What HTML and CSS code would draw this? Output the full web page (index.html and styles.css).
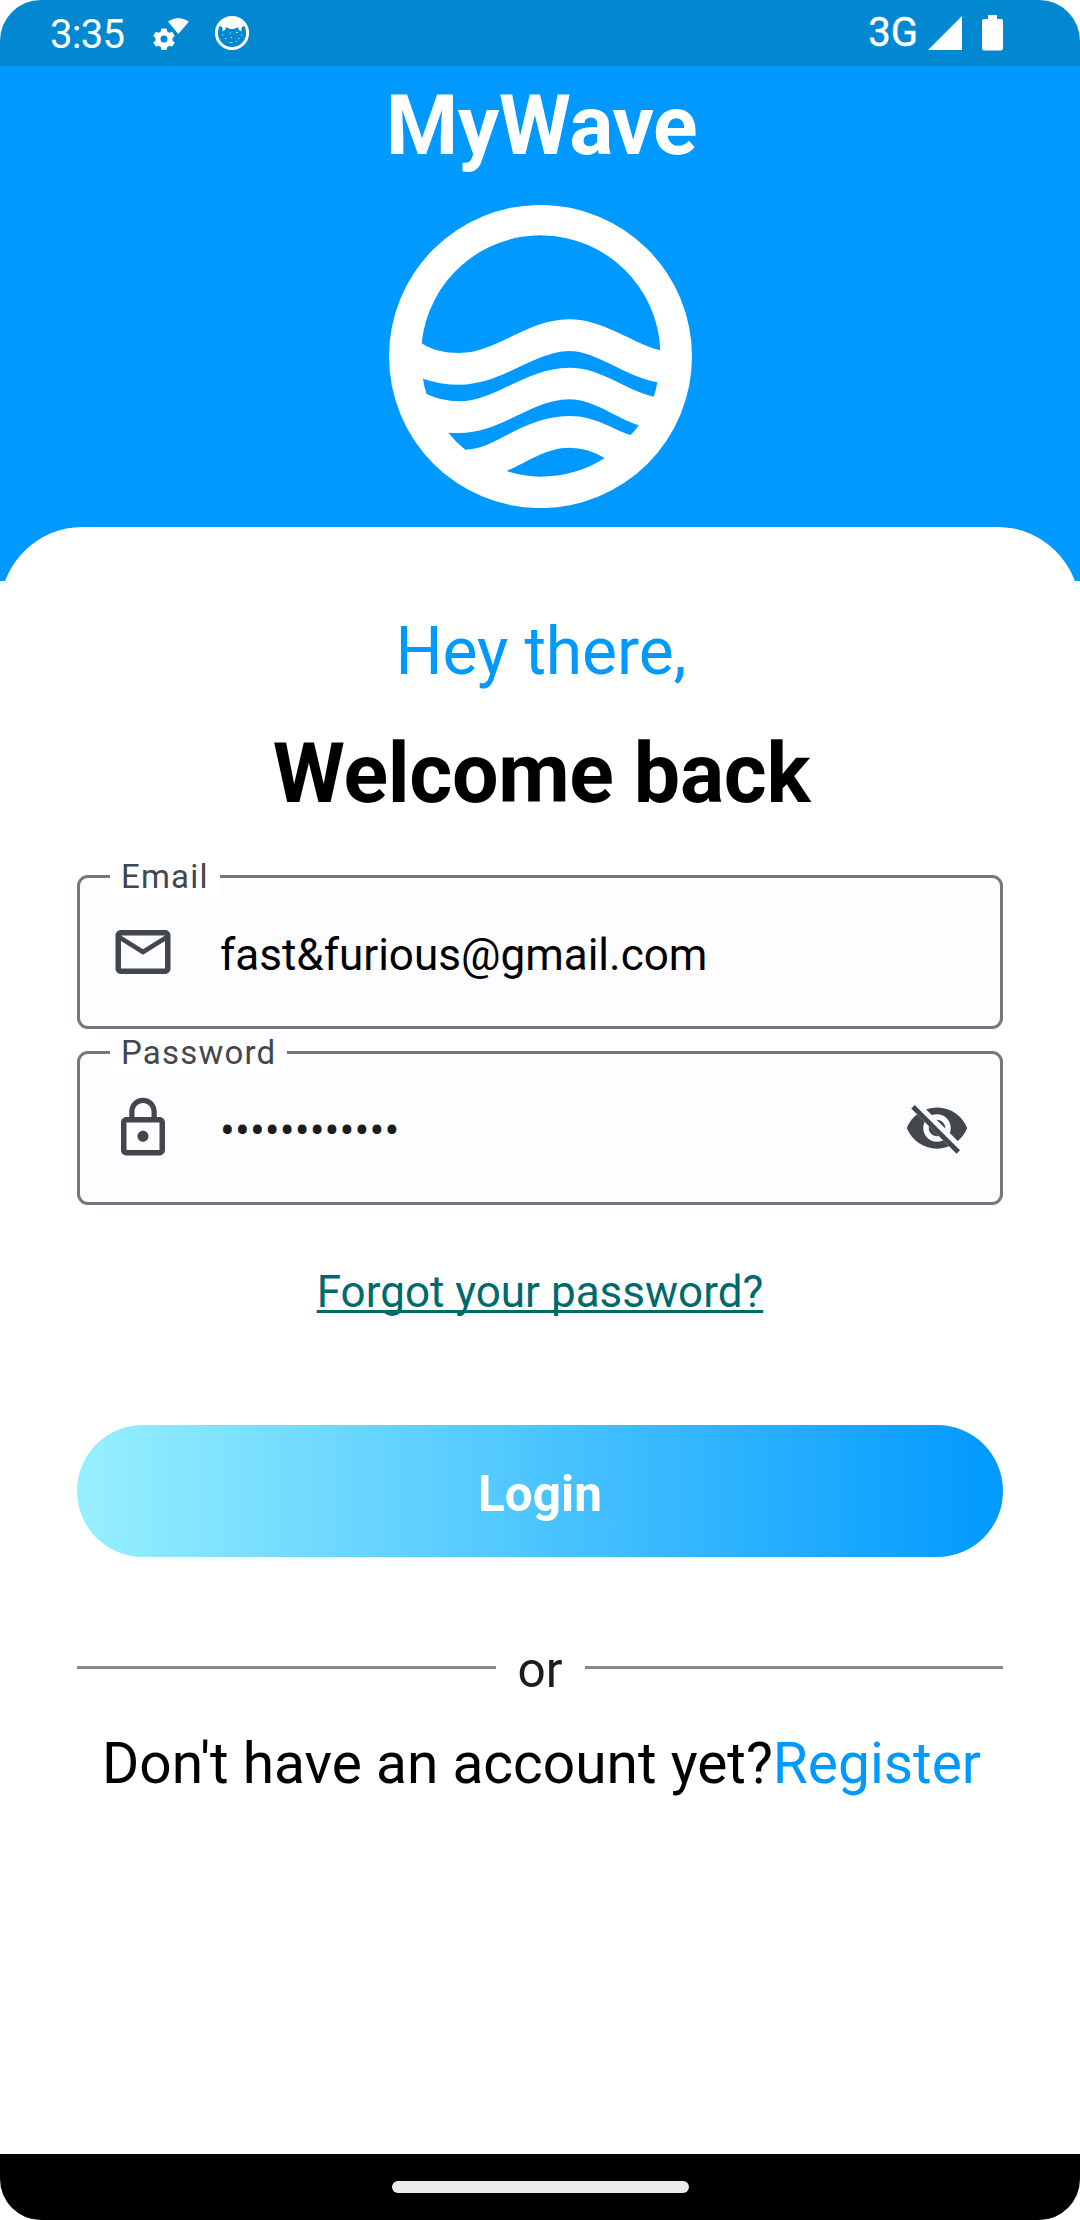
FILE: index.html
```html
<!DOCTYPE html>
<html lang="en">
<head>
<meta charset="utf-8">
<title>MyWave</title>
<link rel="stylesheet" href="styles.css">
</head>
<body>
<div class="screen">
  <div class="status-bar">
    <span class="clock">3:35</span>
    <svg class="gear" width="36" height="36" viewBox="0 0 36 36">
      <path d="M25.3 18 15 5.500Q25 -1.500 36 5.500Z"/>
      <path fill-rule="evenodd" d="M8.500 12.500h5l.8 3.100 2 1.200 3-1 2.400 4.200-2.200 2v2.400l2.200 2-2.400 4.200-3-.9-2 1.200-.8 3.100h-5l-.8-3.100-2-1.200-3 .9L.3 26.400l2.200-2V22l-2.200-2 2.400-4.200 3 1 2-1.200zM11 19.600a3.500 3.500 0 1 0 0 7 3.500 3.500 0 0 0 0-7z"/>
    </svg>
    <svg class="cat" width="36" height="36" viewBox="0 0 36 36">
      <circle cx="18" cy="18" r="15.600" fill="none" stroke="#fff" stroke-width="3"/>
      <path d="M6 11Q10 3 18 3t12 8l-2.500 1.500 0 4-2.500-1.500-1-2.500q-2-.5-3.500 1.500h-5q-1.500-2-3.500-1.500L11 15l-2.500 1.500v-4z"/>
      <path class="specks" d="M8 20h1.500m6-2h1.500m5-.5h2m3 2.500h1.500M11 23.500h1.500m4-1h1.500m6 1h1.500m-9 4h2m3-1h1m-8 1h1"/>
    </svg>
    <span class="network">3G</span>
    <svg class="signal" width="34" height="34" viewBox="0 0 34 34"><path d="M34 0v34H0z"/></svg>
    <svg class="battery" width="21" height="36" viewBox="0 0 21 36"><path d="M6 0h9v4h4q2 0 2 2v27.500q0 2-2 2H2q-2 0-2-2V6q0-2 2-2h4z"/></svg>
  </div>

  <header class="hero">
    <h1 class="brand">MyWave</h1>
    <svg class="logo" width="303" height="303" viewBox="57 405 909 909">
      <path fill="#fff" fill-rule="evenodd" d="M57 859.500a454.500 454.500 0 1 0 909 0a454.500 454.500 0 1 0-909 0z
        M155 820A359 359 0 0 1 871 841C793 823 700 748 598 748C470 748 380 849 268 849C225 849 188 841 155 820z
        M159 926Q210 944 268 944C395 944 495 843 598 843C680 843 765 920 862 937Q859 958 851 980C765 960 695 893 598 893C470 893 375 994 268 994Q215 994 170 972Q162 950 159 926z
        M235 1088Q250 1089 268 1089C395 1089 485 988 598 988C670 988 735 1043 806 1066Q796 1081 782 1095C730 1080 680 1038 598 1038C460 1038 375 1139 286 1139Q257 1116 235 1088z
        M409 1203C470 1177 530 1133 598 1133Q652 1133 704 1164C650 1200 580 1220 512 1220Q460 1220 409 1203z"/>
    </svg>
  </header>

  <main class="sheet">
    <p class="greeting">Hey there,</p>
    <h2 class="welcome">Welcome back</h2>

    <div class="field">
      <span class="field-label">Email</span>
      <svg class="icon" viewBox="0 0 24 24"><path d="M22 6c0-1.100-.9-2-2-2H4c-1.100 0-2 .9-2 2v12c0 1.100.9 2 2 2h16c1.100 0 2-.9 2-2V6zm-2 0l-8 5-8-5h16zm0 12H4V8l8 5 8-5v10z"/></svg>
      <span class="value">fast&amp;furious@gmail.com</span>
    </div>
    <div class="field">
      <span class="field-label">Password</span>
      <svg class="icon" viewBox="0 0 24 24"><path d="M12 17c1.100 0 2-.9 2-2s-.9-2-2-2-2 .9-2 2 .9 2 2 2zm6-9h-1V6c0-2.760-2.240-5-5-5S7 3.240 7 6v2H6c-1.100 0-2 .9-2 2v10c0 1.100.9 2 2 2h12c1.100 0 2-.9 2-2V10c0-1.100-.9-2-2-2zM8.900 6c0-1.710 1.390-3.100 3.100-3.100s3.100 1.390 3.100 3.100v2H8.900V6zM18 20H6V10h12v10z"/></svg>
      <span class="value dots">••••••••••••</span>
      <svg class="icon" viewBox="0 0 24 24">
        <clipPath id="strike"><path d="M2 4.270 19.730 22 22.270 19.460 4.540 1.730V1H23V23H1V4.270z"/></clipPath>
        <path clip-path="url(#strike)" fill-rule="evenodd" d="M12 4.500C7 4.500 2.730 7.610 1 12c1.730 4.390 6 7.500 11 7.500s9.270-3.110 11-7.500c-1.730-4.390-6-7.500-11-7.500zM12 17c-2.760 0-5-2.240-5-5s2.240-5 5-5 5 2.240 5 5-2.240 5-5 5zM12 9c-1.660 0-3 1.340-3 3s1.340 3 3 3 3-1.340 3-3-1.340-3-3-3z"/>
        <path d="M3.270 4.270 19.740 20.740" stroke="#42474e" stroke-width="1.800"/>
      </svg>
    </div>

    <a class="forgot">Forgot your password?</a>
    <button class="login">Login</button>
    <div class="divider"><span class="or">or</span></div>
    <p class="signup">Don't have an account yet?<a class="register">Register</a></p>
  </main>

  <div class="nav-bar"><span class="pill"></span></div>
</div>
</body>
</html>
```
FILE: styles.css
```css
* { box-sizing: border-box; margin: 0; padding: 0; }
body { background: #fff; font-family: Roboto, sans-serif; }

.screen {
  width: 1080px;
  height: 2220px;
  display: flex;
  flex-direction: column;
  overflow: hidden;
  border-radius: 41px;
  background: #fff;
}

.status-bar {
  height: 66px;
  flex: none;
  display: flex;
  align-items: flex-start;
  padding: 0 77px 0 50px;
  background: #0288d1;
  color: #fff;
  fill: #fff;
}
.clock { font-size: 40px; line-height: 70px; letter-spacing: -.7px; width: 103px; }
.gear { margin-top: 16px; }
.cat { margin: 15px 0 0 25px; }
.specks { fill: none; stroke: #fff; stroke-width: 1.200; opacity: .7; }
.network { margin-left: auto; font-size: 40px; line-height: 66px; -webkit-text-stroke: .4px #fff; }
.signal { margin: 16px 0 0 10px; }
.battery { margin: 15px 0 0 20px; }

.hero {
  height: 515px;
  flex: none;
  display: flex;
  flex-direction: column;
  align-items: center;
  background: #09f;
  color: #fff;
}
.brand { font-size: 82.500px; line-height: 97px; margin-top: 11px; padding-left: 3px; letter-spacing: -.5px; }
.logo { margin: 31px 0 0 1px; }

.sheet {
  flex: 1;
  margin-top: -54px;
  padding: 77px 77px 0;
  display: flex;
  flex-direction: column;
  border-radius: 82.500px 82.500px 0 0;
  background: #fff;
  color: #000;
}
.greeting { font-size: 66px; line-height: 78px; margin-top: 9px; padding-left: 2px; letter-spacing: -.1px; color: #09f; text-align: center; }
.welcome { font-size: 82.500px; line-height: 97px; margin-top: 34px; padding-left: 3px; letter-spacing: -.3px; text-align: center; }

.field {
  position: relative;
  height: 154px;
  display: flex;
  align-items: flex-start;
  padding: 41px 30px 0;
  border: 3px solid #72777f;
  border-radius: 11px;
  background: #fdfcff;
}
.welcome + .field { margin-top: 53px; }
.field + .field { margin-top: 22px; }
.field-label {
  position: absolute;
  left: 30px;
  top: -22px;
  height: 41px;
  padding: 0 11px;
  font-size: 33px;
  line-height: 41px;
  letter-spacing: 1.200px;
  color: #42474e;
  background: #fff;
}
.icon { width: 66px; height: 66px; flex: none; fill: #42474e; }
.value { flex: 1; padding-left: 44px; font-size: 44px; line-height: 72px; }
.dots { color: #1a1c1e; letter-spacing: .1px; }

.forgot {
  align-self: center;
  margin-top: 61px;
  font-size: 44px;
  line-height: 52px;
  color: #00696e;
  text-decoration: underline;
  text-decoration-thickness: 2.500px;
  text-decoration-skip-ink: none;
  text-underline-offset: 3px;
}
.login {
  height: 132px;
  margin-top: 107px;
  border: 0;
  border-radius: 66px;
  background: linear-gradient(90deg, #97f0ff, #09f);
  color: #fff;
  font: bold 49.500px/58px Roboto, sans-serif;
  padding-top: 5px;
}
.divider { display: flex; align-items: center; margin-top: 81px; height: 58px; gap: 22px; }
.divider::before, .divider::after { content: ""; flex: 1; height: 3px; background: #888; }
.or { font-size: 49.500px; line-height: 58px; padding-top: 6px; color: #1a1c1e; }
.signup { font-size: 56.850px; line-height: 68px; margin-top: 34px; padding-left: 3px; text-align: center; white-space: nowrap; }
.register { color: #09f; }

.nav-bar {
  height: 66px;
  flex: none;
  display: flex;
  justify-content: center;
  padding-top: 27px;
  background: #000;
}
.pill { width: 297px; height: 12px; border-radius: 6px; background: #ebebeb; }
```
